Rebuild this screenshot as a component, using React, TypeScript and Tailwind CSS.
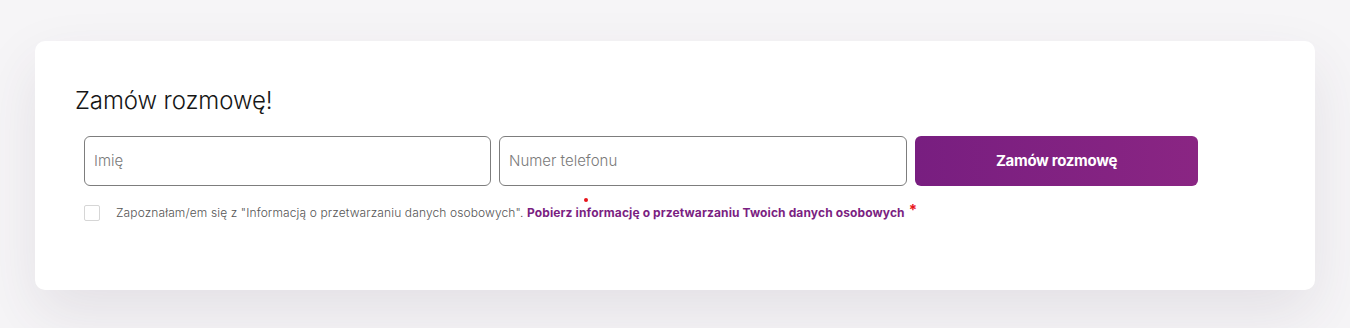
import React from "react";

export default function App() {
  return (
    <div
      className="w-[1350px] h-[328px] bg-[#f6f5f7] pt-[41px] px-[35px]"
      style={{ fontFamily: "Inter, 'Noto Sans', sans-serif" }}
    >
      <div className="h-[249px] rounded-[10px] bg-white shadow-[0_24px_60px_rgba(70,50,80,0.10)] pl-[40px] pt-[44px]">
        <h2 className="text-[24px] leading-[32px] font-light text-[#161616] tracking-[-0.1px]">
          Zamów rozmowę!
        </h2>
        <div className="ml-[9px] mt-[19px] flex gap-[8px]">
          <div className="w-[407px] h-[50px] rounded-[6px] border border-[#7d7d7d] flex items-center px-[9px] text-[15px] text-[#7a7a7a] font-light">
            Imię
          </div>
          <div className="relative w-[408px] h-[50px] rounded-[6px] border border-[#7d7d7d] flex items-center px-[9px] text-[15px] text-[#7a7a7a] font-light">
            Numer telefonu
            <span className="absolute left-[84px] top-[61px] w-[4px] h-[4px] rounded-full bg-[#e8141b]" />
          </div>
          <button className="w-[283px] h-[50px] rounded-[6px] bg-gradient-to-r from-[#781e80] to-[#8a2583] text-white text-[15px] font-bold tracking-[-0.3px]">
            Zamów rozmowę
          </button>
        </div>
        <div className="ml-[9px] mt-[18px] flex items-center">
          <span className="w-[16px] h-[16px] border border-[#d6d6d6] rounded-[2px] bg-white" />
          <span className="ml-[16px] text-[12px] leading-[16px] text-[#555] font-light tracking-[0.12px]">
            Zapoznałam/em się z "Informacją o przetwarzaniu danych osobowych".{" "}
            <span className="font-bold text-[#7b1f82]">
              Pobierz informację o przetwarzaniu Twoich danych osobowych
            </span>
            <span className="text-[#e8141b] text-[15px] font-bold ml-[4px] relative top-[-2px]">*</span>
          </span>
        </div>
      </div>
    </div>
  );
}
